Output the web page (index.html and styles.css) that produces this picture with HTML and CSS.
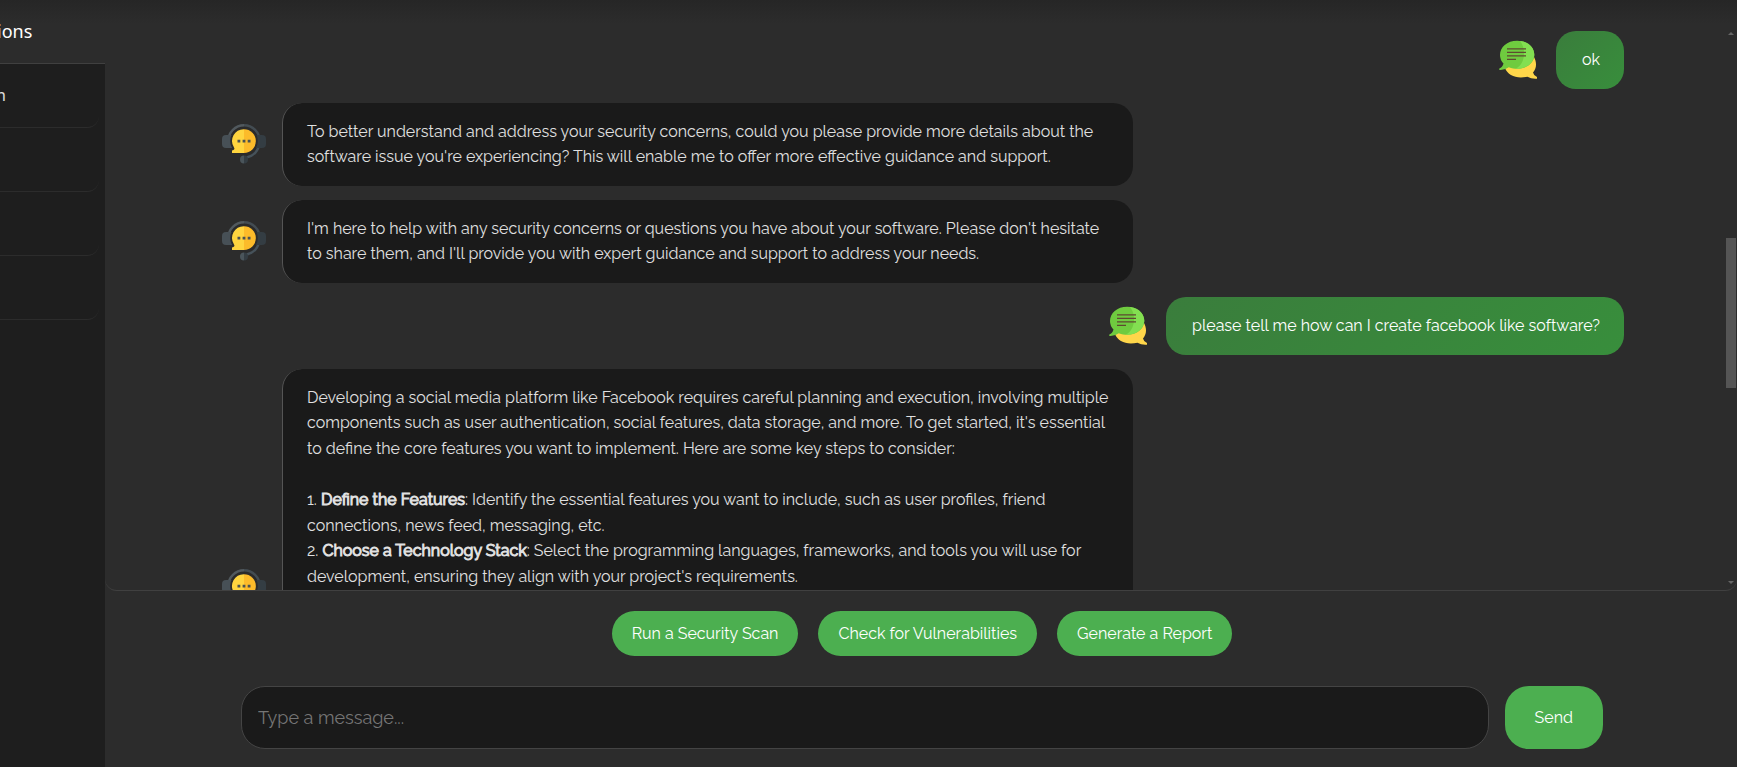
FILE: index.html
```html
<!DOCTYPE html>
<html lang="en">
<head>
<meta charset="utf-8">
<meta name="viewport" content="width=device-width, initial-scale=1">
<title>Security chat</title>
<link rel="stylesheet" href="styles.css">
</head>
<body>
<svg class="sprite" aria-hidden="true">
  <symbol id="bot" viewBox="0 0 44 44">
    <path d="M6.300 19a15.700 15.700 0 0 1 15.700-15.700" fill="none" stroke="#51595e" stroke-width="2.400"/>
    <path d="M22 3.300a15.700 15.700 0 0 1 15.700 15.700" fill="none" stroke="#434c52" stroke-width="2.400"/>
    <path d="M37 23.500Q34.500 33.500 24.500 35.500" fill="none" stroke="#46525a" stroke-width="2.400"/>
    <path d="M10 13H4a4 4 0 0 0-4 4v5a4 4 0 0 0 4 4h6z" fill="#475056"/>
    <path d="M34 13h6a4 4 0 0 1 4 4v5a4 4 0 0 1-4 4h-6z" fill="#343d43"/>
    <circle cx="22" cy="19" r="13.800" fill="#2b2b2b"/>
    <path d="M22 33.500a4 4 0 0 0 0 8z" fill="#4a555b"/>
    <path d="M22 33.500a4 4 0 0 1 0 8z" fill="#343d43"/>
    <path d="M22 7.200A11.800 11.800 0 0 0 12 25.500q1.500 2-2 3v2.400H22z" fill="#ffd53f"/>
    <path d="M22 7.200a11.850 11.850 0 0 1 0 23.700z" fill="#fcbb2a"/>
    <path d="M15.500 17.700h2.800v2.800h-2.800zM20.600 17.700h2.800v2.800h-2.800zM25.700 17.700h2.800v2.800h-2.800z" fill="#4c5350"/>
  </symbol>
  <symbol id="user" viewBox="0 0 44 44">
    <path d="M37.500 18c3.500 6 3.400 12-.5 16.500q.8 3.500 4 4.500v1.700q-5.500.5-9.500-2C21 41 12 38 9 30z" fill="#ffd64a"/>
    <path d="M21.200 2.700C11 2.700 4 9 4 17q0 5 3.500 8.500Q6.500 29.500 3.300 30.500V32q5 .5 9.500-2.800C26 34 38.300 27 38.300 17 38.300 9 31 2.700 21.200 2.700z" fill="#6fcb3f"/>
    <path d="M24 3C34 4 38.500 11 38.300 17c-.5 8-8 14-18.300 13.700C30 25 30 10 24 3z" fill="#83df51"/>
    <path d="M11 10.800h19M11 14.300h19M11 17.800h19M11 21.400h9" fill="none" stroke="#5d4a30" stroke-width="1.300"/>
  </symbol>
</svg>
<div class="app">
  <aside class="sidebar">
    <h2 class="sidebar-title"><span>ions</span></h2>
    <ul class="sessions">
      <li class="session"><span>n</span></li>
      <li class="session"></li>
      <li class="session"></li>
      <li class="session"></li>
    </ul>
  </aside>
  <main class="main">
    <section class="chat">
      <div class="messages">
        <div class="message message-user">
          <svg class="avatar"><use href="#user"/></svg>
          <p class="bubble">ok</p>
        </div>
        <div class="message">
          <svg class="avatar"><use href="#bot"/></svg>
          <p class="bubble">To better understand and address your security concerns, could you please provide more details about the<br>software issue you're experiencing? This will enable me to offer more effective guidance and support.</p>
        </div>
        <div class="message">
          <svg class="avatar"><use href="#bot"/></svg>
          <p class="bubble">I'm here to help with any security concerns or questions you have about your software. Please don't hesitate<br>to share them, and I'll provide you with expert guidance and support to address your needs.</p>
        </div>
        <div class="message message-user">
          <svg class="avatar"><use href="#user"/></svg>
          <p class="bubble">please tell me how can I create facebook like software?</p>
        </div>
        <div class="message">
          <svg class="avatar"><use href="#bot"/></svg>
          <p class="bubble bubble-long">Developing a social media platform like Facebook requires careful planning and execution, involving multiple<br>components such as user authentication, social features, data storage, and more. To get started, it's essential<br>to define the core features you want to implement. Here are some key steps to consider:<br><br>1. <strong>Define the Features</strong>: Identify the essential features you want to include, such as user profiles, friend<br>connections, news feed, messaging, etc.<br>2. <strong>Choose a Technology Stack</strong>: Select the programming languages, frameworks, and tools you will use for<br>development, ensuring they align with your project's requirements.</p>
        </div>
      </div>
      <div class="scrollbar" aria-hidden="true">
        <i class="arrow arrow-up"></i>
        <div class="track"><div class="thumb"></div></div>
        <i class="arrow arrow-down"></i>
      </div>
    </section>
    <footer class="composer">
      <div class="quick">
        <button class="button" type="button">Run a Security Scan</button>
        <button class="button" type="button">Check for Vulnerabilities</button>
        <button class="button" type="button">Generate a Report</button>
      </div>
      <form class="entry">
        <input class="field" type="text" placeholder="Type a message..." aria-label="Type a message">
        <button class="button send" type="button">Send</button>
      </form>
    </footer>
  </main>
</div>
</body>
</html>
```
FILE: styles.css
```css
* { box-sizing: border-box; }
body {
  margin: 0;
  background: #2b2b2b;
  color: #e0e0e0;
  font: 16px/1.6 Raleway, Lato, sans-serif;
}
.sprite { display: none; }
.app {
  display: flex;
  height: 100vh;
  overflow: hidden;
  background: linear-gradient(#262626, #2c2c2c 24px);
}
.sidebar {
  display: flex;
  flex-direction: column;
  flex: 0 0 105px;
  overflow: hidden;
}
.sidebar-title {
  display: flex;
  align-items: center;
  height: 64px;
  margin: 0;
  padding-bottom: 2px;
  border-bottom: 1px solid #404040;
  color: #fff;
  font: 400 18px/24px "Noto Sans", sans-serif;
}
.sidebar-title span { margin-left: -3px; }
.sessions {
  flex: 1;
  margin: 0;
  padding: 0 6px 0 0;
  background: #1e1e1e;
  list-style: none;
}
.session {
  display: flex;
  align-items: center;
  height: 64px;
  padding-bottom: 2px;
  border-bottom: 1px solid #2c2c2c;
  border-radius: 0 0 12px 0;
  font: 16px/24px "Noto Sans", sans-serif;
}
.session span { margin-left: -4px; }
.main {
  display: flex;
  flex: 1;
  flex-direction: column;
  min-width: 0;
}
.chat {
  display: flex;
  flex: 1;
  min-height: 0;
  padding-top: 31px;
  border-bottom: 1px solid #404040;
  border-radius: 0 0 12px 12px;
}
.messages {
  display: flex;
  flex: 1;
  flex-direction: column;
  gap: 14px;
  min-width: 0;
  overflow: hidden;
  padding: 0 101px 0 117px;
}
.message {
  display: flex;
  flex-shrink: 0;
  align-items: center;
  gap: 16px;
}
.message-user { justify-content: flex-end; }
.avatar {
  flex: 0 0 44px;
  height: 44px;
}
.bubble {
  width: 60.7%;
  margin: 0;
  padding: 16px 24px;
  border-left: 1px solid #555;
  border-radius: 20px;
  background: #1a1a1a;
  white-space: nowrap;
}
.bubble-long { min-height: 440px; }
.bubble strong {
  font-weight: 400;
  -webkit-text-stroke: 1px currentColor;
}
.message-user .bubble {
  width: auto;
  padding: 16px 24px 16px 26px;
  border: 0;
  background: linear-gradient(135deg, #3a7d3c, #388e3c);
  color: #fff;
}
.scrollbar {
  display: flex;
  flex: 0 0 12px;
  flex-direction: column;
  align-items: center;
  justify-content: space-between;
  padding: 1px 0 6px;
}
.track {
  flex: 1;
  width: 10px;
  padding-top: 203px;
}
.thumb {
  height: 150px;
  background: #555;
}
.arrow {
  border: 3px solid transparent;
}
.arrow-up { border-top: 0; border-bottom-color: #666; }
.arrow-down { border-bottom: 0; border-top-color: #666; }
.composer { padding: 20px 134px 18px 136px; }
.quick {
  display: flex;
  justify-content: center;
  gap: 20px;
  margin-bottom: 30px;
}
.button {
  height: 45px;
  padding: 0 20px;
  border: 0;
  border-radius: 24px;
  background: #4caf50;
  color: #fff;
  font: inherit;
}
.entry {
  display: flex;
  gap: 16px;
}
.field {
  flex: 1;
  min-width: 0;
  height: 63px;
  padding: 0 16px;
  border: 1px solid #444;
  border-radius: 24px;
  background: #1a1a1a;
  color: #e0e0e0;
  font: inherit;
  font-size: 18px;
}
.field::placeholder { color: #757575; }
.send {
  height: 63px;
  padding: 0 30px;
}
```
